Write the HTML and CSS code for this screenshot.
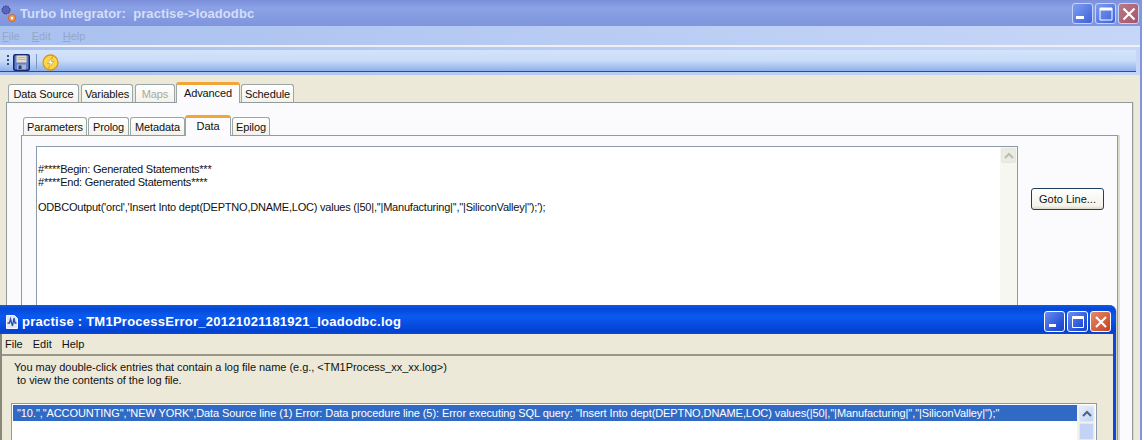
FILE: index.html
```html
<!DOCTYPE html>
<html lang="en">
<head>
<meta charset="utf-8">
<title>Turbo Integrator</title>
<link rel="stylesheet" href="styles.css">
</head>
<body>
<div class="desktop">
  <section class="win main">
    <header class="titlebar main-title">
      <svg class="appicon" width="16" height="18" viewBox="0 0 16 18"><circle cx="5" cy="6" r="4" fill="#5c63b8" stroke="#26307a" stroke-dasharray="1.5 1"/><circle cx="11" cy="14" r="3.5" fill="#f0a050" stroke="#d86020"/><circle cx="11" cy="14" r="1.2" fill="#fff"/></svg>
      <span class="title">Turbo Integrator:&nbsp; practise-&gt;loadodbc</span>
      <div class="ctrls">
        <span class="ctrl faded"><svg width="22" height="20" viewBox="0 0 22 20"><rect x="4" y="12" width="8" height="3" fill="#fff"/></svg></span>
        <span class="ctrl faded"><svg width="22" height="20" viewBox="0 0 22 20"><path d="M5 4h12v12H5z" fill="none" stroke="#fff"/><rect x="5" y="4" width="12" height="2.5" fill="#fff"/></svg></span>
        <span class="ctrl faded close"><svg width="22" height="20" viewBox="0 0 22 20"><path d="M5.500 4.500l11 11M16.500 4.500l-11 11" stroke="#fff" stroke-width="2.200"/></svg></span>
      </div>
    </header>
    <nav class="menubar dim"><span><u>F</u>ile</span><span><u>E</u>dit</span><span><u>H</u>elp</span></nav>
    <div class="toolbar">
      <div class="band">
        <span class="grip"></span>
        <svg width="17" height="17" viewBox="0 0 17 17"><rect x=".75" y=".75" width="15.500" height="15.500" rx="1.500" fill="#5f82cf" stroke="#16286e" stroke-width="1.500"/><rect x="3.500" y="1.500" width="10" height="7" fill="#e4dcc8"/><path d="M4.500 3.500h8M4.500 5.500h8" stroke="#b8b4a8"/><rect x="4" y="10.500" width="9" height="5" fill="#a9b2c6"/><rect x="5.500" y="11.500" width="3" height="3.500" fill="#2a3a78"/></svg>
        <span class="tsep"></span>
        <svg width="17" height="17" viewBox="0 0 17 17"><circle cx="8.500" cy="8.500" r="7.500" fill="#f7d84a" stroke="#e0941c" stroke-width="1.300"/><path d="M10.500 2.500L5.500 9.500h2.800L6.500 14.500l5.500-7H9.300z" fill="#fffbe0" stroke="#c98a18" stroke-width=".6"/></svg>
      </div>
    </div>
    <div class="client">
      <div class="tabs outer-tabs">
        <span class="tab w1">Data Source</span>
        <span class="tab w2">Variables</span>
        <span class="tab w3 off">Maps</span>
        <span class="tab w4 active">Advanced</span>
        <span class="tab w5">Schedule</span>
      </div>
      <div class="panel outer-panel">
        <div class="tabs inner-tabs">
          <span class="tab i1">Parameters</span>
          <span class="tab i2">Prolog</span>
          <span class="tab i3">Metadata</span>
          <span class="tab i4 active">Data</span>
          <span class="tab i5">Epilog</span>
        </div>
        <div class="panel inner-panel">
          <div class="editor">
            <pre class="code">#****Begin: Generated Statements***
#****End: Generated Statements****

ODBCOutput('orcl','Insert Into dept(DEPTNO,DNAME,LOC) values (|50|,''|Manufacturing|'',''|SiliconValley|'');');</pre>
            <div class="vscroll pale"><span class="sbtn"><svg width="14" height="14" viewBox="0 0 14 14"><path d="M3 9l4-4 4 4" fill="none" stroke="#b8bcb8" stroke-width="2"/></svg></span></div>
          </div>
          <button class="goto" type="button">Goto Line...</button>
        </div>
      </div>
    </div>
  </section>

  <section class="win err">
    <header class="titlebar err-title">
      <svg class="docicon" width="16" height="16" viewBox="0 0 16 16"><path d="M2.500 1.500h8l3 3v10h-11z" fill="#dfe6f6" stroke="#f4f6fc"/><path d="M3.500 9h2l1-4 2 7 1.500-8 1 5h1.500" fill="none" stroke="#2a4ea8" stroke-width="1.300"/></svg>
      <span class="title">practise : TM1ProcessError_20121021181921_loadodbc.log</span>
      <div class="ctrls">
        <span class="ctrl"><svg width="20" height="20" viewBox="0 0 20 20"><rect x="4" y="12" width="7" height="3" fill="#fff"/></svg></span>
        <span class="ctrl"><svg width="20" height="20" viewBox="0 0 20 20"><path d="M4.500 4.500h11v11h-11z" fill="none" stroke="#fff"/><rect x="4.500" y="4.500" width="11" height="2.500" fill="#fff"/></svg></span>
        <span class="ctrl close"><svg width="20" height="20" viewBox="0 0 20 20"><path d="M5 5l10 10M15 5L5 15" stroke="#fff" stroke-width="2.200"/></svg></span>
      </div>
    </header>
    <nav class="menubar err-menu"><span>File</span><span>Edit</span><span>Help</span></nav>
    <div class="err-body">
      <p class="hint">You may double-click entries that contain a log file name (e.g., &lt;TM1Process_xx_xx.log&gt;)<br><span class="hint2">to view the contents of the log file.</span></p>
      <div class="listbox">
        <div class="rows"><div class="row">"10.","ACCOUNTING","NEW YORK",Data Source line (1) Error: Data procedure line (5): Error executing SQL query: "Insert Into dept(DEPTNO,DNAME,LOC) values(|50|,"|Manufacturing|","|SiliconValley|");"</div></div>
        <div class="vscroll"><span class="sbtn blue"><svg width="14" height="14" viewBox="0 0 14 14"><path d="M3 9l4-4 4 4" fill="none" stroke="#4d6185" stroke-width="2"/></svg></span><span class="sthumb"></span></div>
      </div>
    </div>
  </section>
</div>
</body>
</html>
```
FILE: styles.css
```css
* { box-sizing: border-box; }
html, body { margin: 0; padding: 0; }
body { width: 1144px; height: 440px; overflow: hidden; background: #fff; font-family: "Liberation Sans", Arial, sans-serif; }
.desktop { position: relative; width: 1144px; height: 440px; overflow: hidden; }
.win { position: absolute; }
.main { left: 0; top: 0; width: 1142px; height: 440px; background: #ece9d8; border-right: 2px solid #8296dc; display: flex; flex-direction: column; }

.titlebar { display: flex; align-items: center; color: #fff; }
.main-title { flex: none; height: 26px; background: linear-gradient(#7b8fdb, #8ba2e6 30%, #7f95dc); padding: 0 1px 0 1px; color: #d4def8; }
.appicon { flex: none; }
.title { font: bold 13px "Liberation Sans", Arial, sans-serif; letter-spacing: .08px; margin-left: 3px; white-space: nowrap; }
.ctrls { margin-left: auto; display: flex; gap: 2px; }
.ctrl { width: 21px; height: 21px; border: 1px solid #fff; border-radius: 3px; background: linear-gradient(135deg, #6d8df0, #2552d8 70%, #2045c0); overflow: hidden; display: block; }
.ctrl svg { display: block; margin: 0 0 0 -1px; }
.ctrl.faded { background: linear-gradient(135deg, #7f9ef0, #3b63dc); border-color: #c6d3f6; }
.ctrl.close { background: linear-gradient(135deg, #e88a68, #c8401c); }
.ctrl.faded.close { background: linear-gradient(135deg, #b87a88, #a85468); }

.menubar { display: flex; align-items: center; font-size: 11px; padding-left: 2px; }
.menubar.dim { height: 19px; gap: 12px; background: linear-gradient(90deg, #a9c1ef, #c6d6f8); color: #94a6c8; flex: none; }
.toolbar { flex: none; height: 30px; border-top: 2px solid #eef0f4; background: linear-gradient(90deg, #a9c1ef, #c6d6f8); padding: 3px 4px 3px 0; }
.band { height: 22px; border-bottom: 1px solid #23528f; background: linear-gradient(#d4e3fa, #c9dcf8 50%, #8fb0ea); padding: 4px 0 0 7px; display: flex; align-items: flex-start; gap: 4px; }
.grip { width: 2px; height: 12px; margin-top: 1px; background: repeating-linear-gradient(#34507f 0 2px, transparent 2px 4px); }
.band svg { flex: none; }
.tsep { width: 1px; height: 15px; background: #7a96c8; margin: 0 1px 0 2px; }

.client { flex: 1; min-height: 0; padding: 7px 0 0 6px; display: flex; flex-direction: column; }
.tabs { display: flex; align-items: flex-end; font-size: 11px; letter-spacing: -.1px; flex: none; position: relative; z-index: 1; }
.tab { height: 18px; border: 1px solid #9aa6a8; border-bottom: 0; border-radius: 3px 3px 0 0; background: linear-gradient(#fff, #f3f2ea); color: #111; display: flex; align-items: center; justify-content: center; white-space: nowrap; margin-right: 2px; }
.tab.off { color: #a8a8a0; }
.tab.active { height: 21px; background: #fcfcfe; border-top: 3px solid #f2a63a; margin-right: 1px; margin-bottom: -1px; padding-bottom: 3px; }
.outer-tabs { padding-left: 2px; }
.w1 { width: 71px; } .w2 { width: 52px; } .w3 { width: 40px; margin-right: 1px; } .w4 { width: 64px; } .w5 { width: 53px; }
.inner-tabs { padding-left: 2px; }
.i1 { width: 64px; margin-right: 1px; } .i2 { width: 41px; margin-right: 1px; } .i3 { width: 55px; margin-right: 0; } .i4 { width: 46px; margin-right: 0; } .i5 { width: 38px; }

.panel { border: 1px solid #919b9c; background: #fbfbfe; }
.outer-panel { width: 1127px; flex: 1; min-height: 0; border-bottom: 0; padding: 12px 0 0 14px; display: flex; flex-direction: column; box-shadow: 1px 0 0 #d8d6c4; }
.inner-panel { width: 1097px; flex: 1; min-height: 0; border-bottom: 0; padding: 10px 0 0 14px; display: flex; align-items: flex-start; box-shadow: 2px 0 0 #dedccc; }
.editor { width: 982px; height: 300px; flex: none; display: flex; border: 1px solid #8b9aa8; background: #fff; }
.code { flex: 1; margin: 0; padding: 16px 0 0 1px; font: 11px/12.600px "Liberation Sans", Arial, sans-serif; letter-spacing: -.215px; color: #111; white-space: pre; overflow: hidden; }
.vscroll { width: 17px; flex: none; background: #f7f7f1; padding: 1px 1px 0 1px; display: flex; flex-direction: column; gap: 1px; }
.sbtn { display: block; width: 15px; height: 15px; border: 1px solid #e6e6dc; border-radius: 2px; background: #ecebe2; }
.sbtn svg { display: block; }
.goto { flex: none; width: 73px; height: 22px; margin: 42px 0 0 13px; padding: 0; border: 1px solid #1f3f60; border-radius: 3px; background: linear-gradient(#fff, #f3f2ea 85%, #dcd8c8); font: 11px "Liberation Sans", Arial, sans-serif; color: #111; }

.err { left: 0; top: 305px; width: 1116px; height: 135px; background: #ece9d8; border-right: 3px solid #0f47d8; border-left: 2px solid #8a8878; box-shadow: 1px 0 0 #cfcfc4; border-top-right-radius: 7px; display: flex; flex-direction: column; }
.err-title { flex: none; height: 29px; margin: 0 -3px 0 -2px; padding: 4px 5px 0 4px; background: linear-gradient(#0a5ce4, #0448d8 12%, #0a5af0 40%, #0340d0 92%, #0a4ad4); border-top-right-radius: 7px; color: #fff; }
.err-title .title { margin-left: 2px; letter-spacing: .25px; }
.err-title .ctrl svg { margin: 0; }
.err-menu { flex: none; height: 22px; background: #ece9d8; font-size: 11px; color: #111; gap: 10px; padding-left: 3px; border-bottom: 2px solid #9a9688; }
.err-body { flex: 1; min-height: 0; padding-left: 9px; display: flex; flex-direction: column; }
.hint { margin: 5px 0 0 3px; font-size: 11px; letter-spacing: -.03px; line-height: 13px; color: #111; height: 34px; }
.hint2 { margin-left: 3px; }
.listbox { width: 1086px; flex: 1; min-height: 0; margin-top: 8px; border: 1px solid #8b9aa8; border-bottom: 0; background: #fff; display: flex; padding: 1px 1px 0 1px; }
.rows { flex: 1; min-width: 0; }
.row { height: 16px; background: #316ac5; color: #fff; font-size: 11px; letter-spacing: -.08px; line-height: 16px; padding-left: 4px; white-space: nowrap; overflow: hidden; }
.listbox .vscroll { background: #f3f2ea; padding-left: 2px; width: 18px; }
.sbtn.blue { background: linear-gradient(135deg, #e6eefc, #c3d3f6); border-color: #e0e8f8; height: 16px; }
.sthumb { display: block; flex: 1; width: 15px; border: 1px solid #e0e8f8; border-radius: 2px; background: #c3d3f6; }
```
